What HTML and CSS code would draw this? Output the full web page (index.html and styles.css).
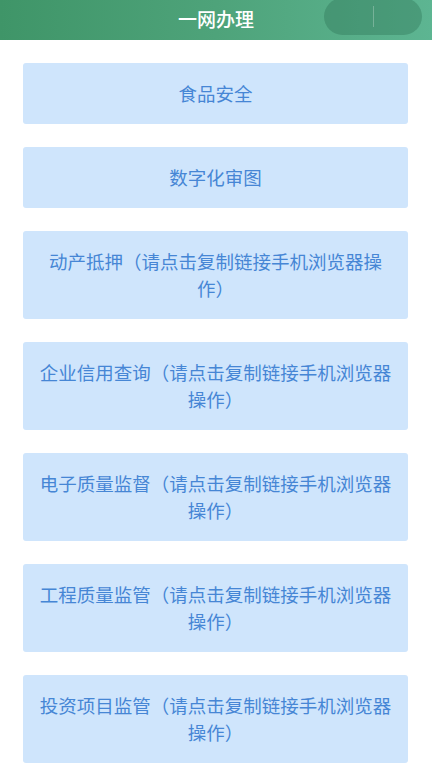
FILE: index.html
```html
<!DOCTYPE html>
<html lang="zh-CN">

<head>
    <meta charset="UTF-8">
    <title>一网办理</title>
    <link rel="stylesheet" href="styles.css">
</head>

<body>
    <div class="nav_bar">
        <h1>一网办理</h1>
        <div class="capsule">
            <span></span>
            <span></span>
        </div>
    </div>

    <div class="list">
        <div class="item">食品安全</div>
        <div class="item">数字化审图</div>
        <div class="item">动产抵押（请点击复制链接手机浏览器操作）</div>
        <div class="item">企业信用查询（请点击复制链接手机浏览器操作）</div>
        <div class="item">电子质量监督（请点击复制链接手机浏览器操作）</div>
        <div class="item">工程质量监管（请点击复制链接手机浏览器操作）</div>
        <div class="item">投资项目监管（请点击复制链接手机浏览器操作）</div>
    </div>
</body>

</html>
```

FILE: styles.css
```css
* {
    margin: 0;
    padding: 0;
    box-sizing: border-box;
}

body {
    font-family: 'Noto Sans CJK SC', 'Noto Sans', sans-serif;
    background: #fff;
}

.nav_bar {
    position: relative;
    height: 40px;
    display: flex;
    align-items: center;
    justify-content: center;
    background: linear-gradient(90deg, #3f9568 0%, #4ea37a 50%, #5db592 100%);
}

.nav_bar h1 {
    color: #fff;
    font-size: 19px;
    font-weight: 500;
    margin-top: -4px;
}

/* mini program capsule, sits over the bar */
.capsule {
    position: absolute;
    right: 10px;
    top: -2px;
    width: 98px;
    height: 37px;
    border-radius: 19px;
    background: rgba(40, 110, 80, 0.35);
    display: flex;
}

.capsule span {
    flex: 1;
}

.capsule span:first-child {
    border-right: 1px solid rgba(255, 255, 255, 0.25);
    margin: 8px 0;
}

.list {
    display: flex;
    flex-direction: column;
    gap: 23px;
    padding: 23px 24px 23px 23px;
}

.item {
    background: #cfe5fc;
    border-radius: 3px;
    color: #4686d5;
    font-size: 18.5px;
    line-height: 27px;
    text-align: center;
    padding: 17px 14px;
}
```
